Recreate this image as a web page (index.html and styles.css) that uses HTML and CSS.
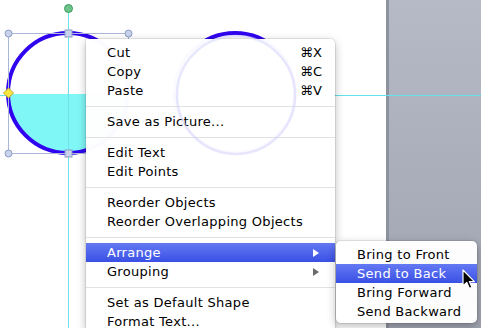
FILE: index.html
```html
<!DOCTYPE html>
<html lang="en">
<head>
    <meta charset="UTF-8">
    <title>Context Menu - Arrange</title>
    <link rel="stylesheet" href="styles.css">
</head>
<body>
    <div class="stage">
        <div class="page"></div>
        <div class="pasteboard"></div>
    </div>

    <!-- shapes on the slide -->
    <svg class="canvas" width="481" height="328" viewBox="0 0 481 328">
        <defs>
            <clipPath id="lower-half">
                <rect x="0" y="94" width="200" height="80"></rect>
            </clipPath>
        </defs>
        <line x1="0" y1="95.5" x2="481" y2="95.5" stroke="#62e2ec" stroke-width="1"></line>
        <circle cx="69" cy="95" r="60" fill="rgba(0,0,0,0.06)"></circle>
        <circle cx="68" cy="93" r="60" fill="#fff"></circle>
        <circle cx="68" cy="93" r="60" fill="#80f7f7" clip-path="url(#lower-half)"></circle>
        <circle cx="68" cy="93" r="60" fill="none" stroke="#3004ee" stroke-width="4"></circle>
        <circle cx="235" cy="93" r="60" fill="none" stroke="#3004ee" stroke-width="4"></circle>
        <line x1="68.5" y1="8" x2="68.5" y2="328" stroke="#6fe3ec" stroke-width="1"></line>
        <rect x="8.5" y="33.5" width="120" height="120" fill="none" stroke="#aab8d8" stroke-width="1"></rect>
        <circle cx="8.5" cy="33.5" r="3.5" fill="#c9d4ec" stroke="#8c9cc4"></circle>
        <circle cx="128.5" cy="33.5" r="3.5" fill="#c9d4ec" stroke="#8c9cc4"></circle>
        <circle cx="8.5" cy="153.5" r="3.5" fill="#c9d4ec" stroke="#8c9cc4"></circle>
        <rect x="65" y="30" width="7" height="7" fill="#c9d4ec" stroke="#8c9cc4"></rect>
        <rect x="65" y="150" width="7" height="7" fill="#c9d4ec" stroke="#8c9cc4"></rect>
        <circle cx="68.5" cy="8.5" r="4" fill="#6cc48a" stroke="#3f9a60"></circle>
        <path d="M8.5 88 L13.5 93 L8.5 98 L3.5 93 Z" fill="#f5e642" stroke="#c7a928"></path>
    </svg>

    <div class="menu">
        <div class="item"><span>Cut</span><span class="key">⌘X</span></div>
        <div class="item"><span>Copy</span><span class="key">⌘C</span></div>
        <div class="item"><span>Paste</span><span class="key">⌘V</span></div>
        <div class="sep"></div>
        <div class="item"><span>Save as Picture...</span></div>
        <div class="sep"></div>
        <div class="item"><span>Edit Text</span></div>
        <div class="item"><span>Edit Points</span></div>
        <div class="sep"></div>
        <div class="item"><span>Reorder Objects</span></div>
        <div class="item"><span>Reorder Overlapping Objects</span></div>
        <div class="sep"></div>
        <div class="item active"><span>Arrange</span><span class="arrow"></span></div>
        <div class="item"><span>Grouping</span><span class="arrow"></span></div>
        <div class="sep"></div>
        <div class="item"><span>Set as Default Shape</span></div>
        <div class="item"><span>Format Text...</span></div>
    </div>

    <!-- drag preview of the shape, drawn above the menu -->
    <svg class="ghost" width="481" height="328" viewBox="0 0 481 328">
        <circle cx="236" cy="95" r="59" fill="none" stroke="rgba(205,205,250,0.45)" stroke-width="2.5"></circle>
    </svg>

    <div class="menu submenu">
        <div class="item"><span>Bring to Front</span></div>
        <div class="item active"><span>Send to Back</span></div>
        <div class="item"><span>Bring Forward</span></div>
        <div class="item"><span>Send Backward</span></div>
    </div>

    <svg class="cursor" width="14" height="22" viewBox="0 0 14 22">
        <path d="M1 1 L1 17 L4.8 13.4 L7.4 19.4 L10 18.4 L7.4 12.6 L12.4 12.6 Z" fill="#000" stroke="#fff" stroke-width="1.2" stroke-linejoin="round"></path>
    </svg>
</body>
</html>
```

FILE: styles.css
```css
body {
    margin: 0;
    width: 481px;
    height: 328px;
    overflow: hidden;
    position: relative;
    font-family: "DejaVu Sans", sans-serif;
    font-size: 13px;
    letter-spacing: 0.3px;
    color: #000;
}
.stage {
    display: flex;
    height: 328px;
}
.page {
    width: 386px;
    background-color: #fff;
}
.pasteboard {
    flex: 1;
    border-left: 3px solid #8e929d;
    background: linear-gradient(#b6bac6, #a0a4b0);
}
.canvas,
.ghost {
    position: absolute;
    left: 0;
    top: 0;
}
.ghost {
    z-index: 3;
    pointer-events: none;
}
.menu {
    position: absolute;
    z-index: 2;
    left: 86px;
    top: 39px;
    width: 249px;
    padding-top: 4px;
    background-color: rgba(255, 255, 255, 0.98);
    border-radius: 0 5px 5px 5px;
    box-shadow: 0 0 0 1px rgba(0, 0, 0, 0.08), 0 3px 10px rgba(0, 0, 0, 0.28);
}
.item {
    display: flex;
    justify-content: space-between;
    align-items: center;
    height: 19px;
    padding: 0 13px 0 21px;
    white-space: nowrap;
}
.item.active {
    color: #fff;
    background: linear-gradient(#6479f3, #3a50e5);
}
.key {
    letter-spacing: 0;
}
.arrow {
    width: 0;
    height: 0;
    margin-right: 3px;
    border-top: 4px solid transparent;
    border-bottom: 4px solid transparent;
    border-left: 6px solid #6a6a6a;
}
.item.active .arrow {
    border-left-color: #fff;
}
.sep {
    height: 1px;
    margin: 6px 0 5px;
    background-color: #e2e2e2;
}
.submenu {
    z-index: 4;
    left: 336px;
    top: 241px;
    width: 141px;
    padding: 4px 0 2px;
    border-radius: 5px;
}
.cursor {
    position: absolute;
    z-index: 5;
    left: 462px;
    top: 269px;
}
```
